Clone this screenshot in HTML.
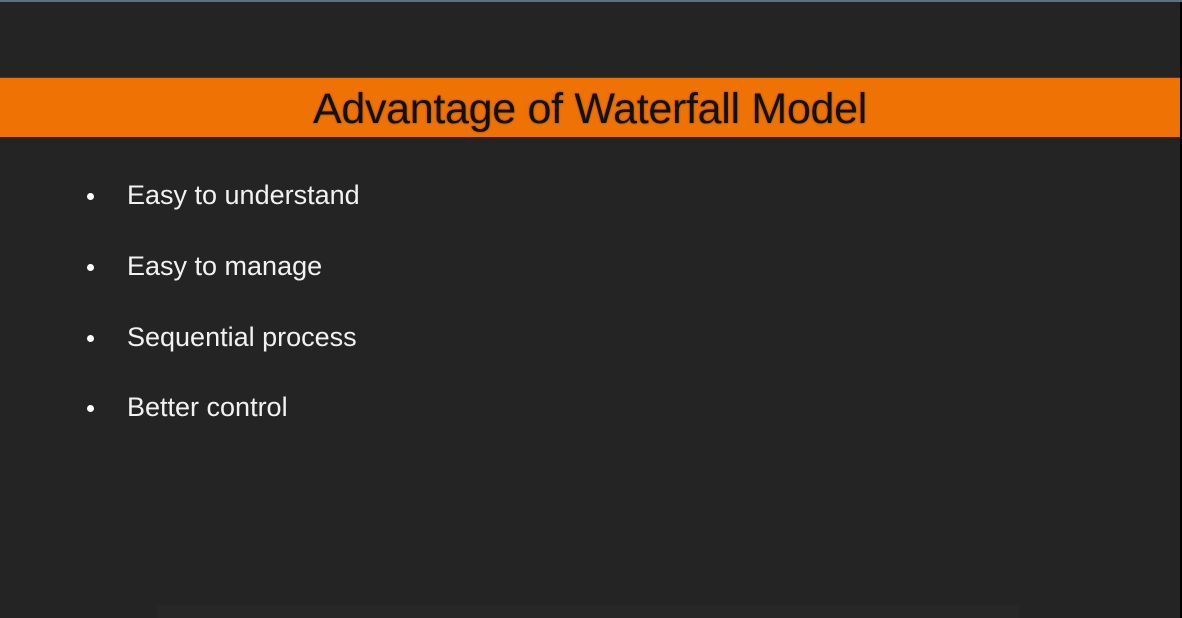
<!DOCTYPE html>
<html><head><style>
html,body{margin:0;padding:0}
body{width:1182px;height:618px;background:#242424;position:relative;overflow:hidden;font-family:"Liberation Sans",sans-serif}
.top{position:absolute;left:0;top:0;width:1182px;height:2px;background:#5a7382}
.right{position:absolute;right:0;top:2px;width:2px;height:616px;background:#000}
.band{position:absolute;left:0;top:77px;width:1180px;height:61px;background:#ef7204;border-top:1px solid #3a3a3a;border-bottom:1px solid #3a1a00;box-sizing:border-box}
.title{position:absolute;left:0;width:1180px;top:85px;text-align:center;font-size:43px;color:#111;text-shadow:0 0 2px rgba(0,0,0,.4);letter-spacing:-0.3px}
.item{position:absolute;left:127px;font-size:27px;color:#f2f2f2;font-weight:300}
.dot{position:absolute;left:87px;width:7px;height:7px;border-radius:50%;background:#fff}
.foot{position:absolute;left:157px;top:605px;width:862px;height:13px;background:#272727}
</style></head><body>
<div class="top"></div><div class="right"></div>
<div class="band"></div>
<div class="title">Advantage of Waterfall Model</div>
<div class="dot" style="top:193px"></div><div class="item" style="top:180px">Easy to understand</div>
<div class="dot" style="top:264px"></div><div class="item" style="top:251px">Easy to manage</div>
<div class="dot" style="top:335px"></div><div class="item" style="top:322px">Sequential process</div>
<div class="dot" style="top:405px"></div><div class="item" style="top:392px">Better control</div>
<div class="foot"></div>
</body></html>
